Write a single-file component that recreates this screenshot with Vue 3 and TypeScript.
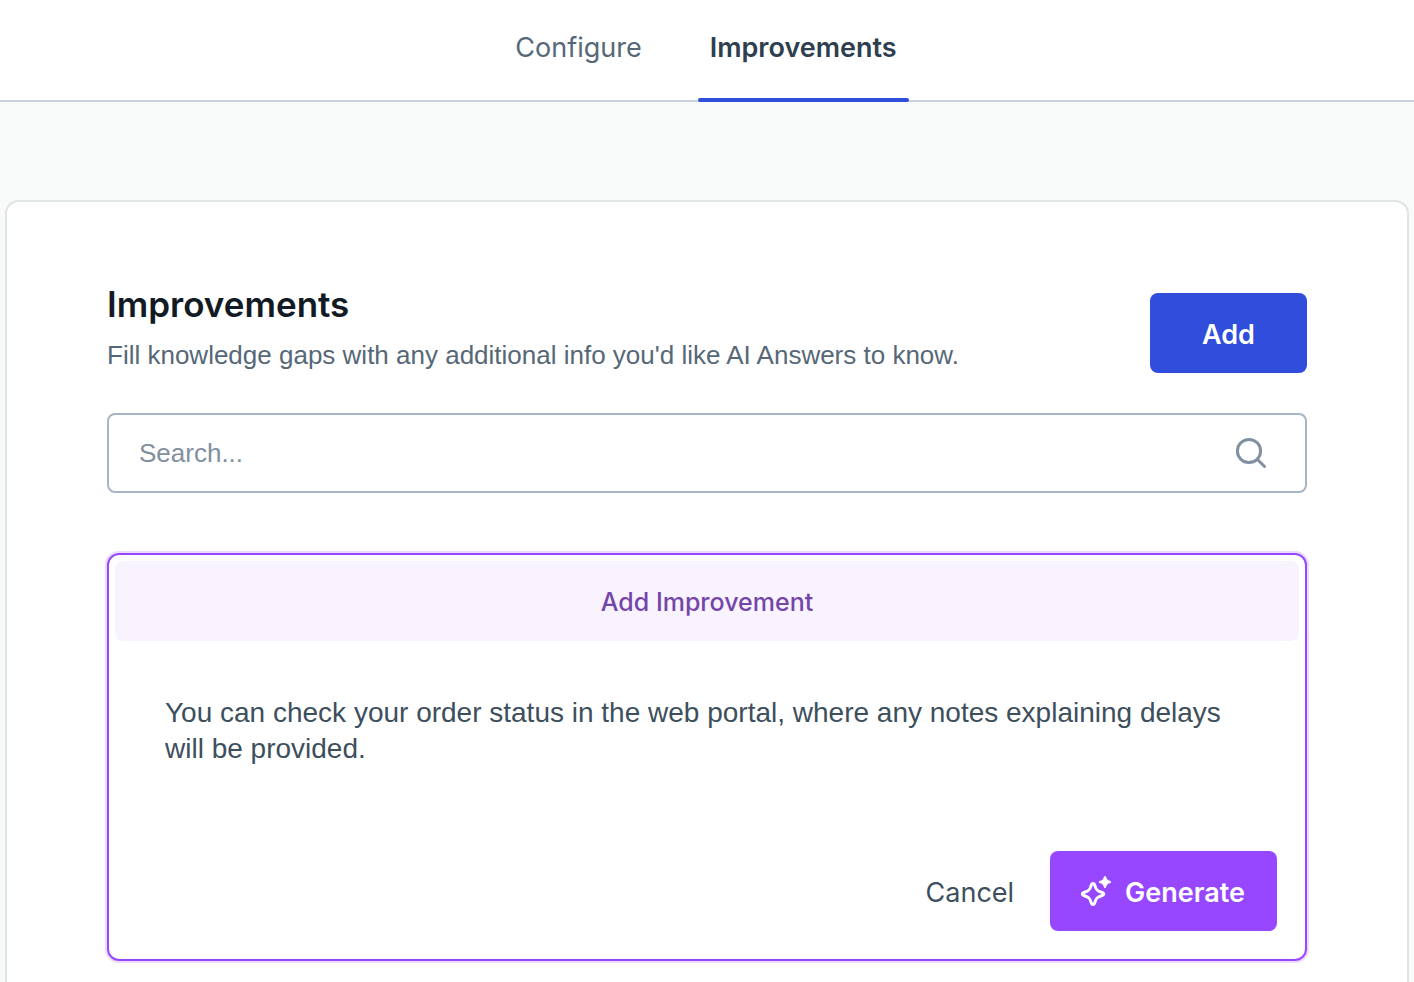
<script setup lang="ts">
import { ref } from 'vue'

interface Tab {
  id: string
  label: string
}

const tabs: Tab[] = [
  { id: 'configure', label: 'Configure' },
  { id: 'improvements', label: 'Improvements' },
]

const activeTab = ref<string>('improvements')
const search = ref<string>('')
const draft = ref<string>(
  'You can check your order status in the web portal, where any notes explaining delays will be provided.',
)
</script>

<template>
  <div class="page">
    <nav class="tabs">
      <button
        v-for="tab in tabs"
        :key="tab.id"
        type="button"
        class="tab"
        :class="{ active: tab.id === activeTab }"
        @click="activeTab = tab.id"
      >
        {{ tab.label }}
      </button>
    </nav>

    <main class="card">
      <header class="card-header">
        <div class="intro">
          <h1 class="title">Improvements</h1>
          <p class="subtitle">Fill knowledge gaps with any additional info you'd like AI Answers to know.</p>
        </div>
        <button type="button" class="button primary">Add</button>
      </header>

      <label class="search">
        <input v-model="search" type="text" class="search-input" placeholder="Search..." aria-label="Search" />
        <svg class="search-icon" viewBox="0 0 32 32" aria-hidden="true">
          <circle cx="14" cy="14" r="11.6" />
          <path d="M22.5 22.5 L29.5 29.5" />
        </svg>
      </label>

      <section class="panel">
        <h2 class="panel-title">Add Improvement</h2>
        <textarea v-model="draft" class="draft" rows="3" aria-label="Improvement text"></textarea>
        <div class="actions">
          <button type="button" class="cancel">Cancel</button>
          <button type="button" class="button generate">
            <svg class="sparkle" viewBox="0 0 32 32" aria-hidden="true">
              <path
                class="star-large"
                d="M13 7.5 C14 7.5 14.6 8.4 15 9.8 C16.1 13.7 17.3 14.9 21 16 C24.6 17.1 24.6 18.9 21 20 C17.3 21.1 16.1 22.3 15 26.2 C14.2 29.3 11.8 29.3 11 26.2 C9.9 22.3 8.7 21.1 5 20 C1.4 18.9 1.4 17.1 5 16 C8.7 14.9 9.9 13.7 11 9.8 C11.4 8.4 12 7.5 13 7.5 Z"
              />
              <path
                class="star-small"
                d="M25 0.4 C25.5 0.4 25.7 0.8 25.8 1.2 C26.5 3.8 27.2 4.5 29.8 5.2 C31.2 5.6 31.2 6.4 29.8 6.8 C27.2 7.5 26.5 8.2 25.8 10.8 C25.4 12.2 24.6 12.2 24.2 10.8 C23.5 8.2 22.8 7.5 20.2 6.8 C18.8 6.4 18.8 5.6 20.2 5.2 C22.8 4.5 23.5 3.8 24.2 1.2 C24.3 0.8 24.5 0.4 25 0.4 Z"
              />
            </svg>
            <span>Generate</span>
          </button>
        </div>
      </section>
    </main>
  </div>
</template>

<style>
html {
  background: #f8faf9;
}

body {
  margin: 0;
}
</style>

<style scoped>
.page {
  box-sizing: border-box;
  display: flex;
  flex-direction: column;
  min-height: 100vh;
  font-family: Inter, "Liberation Sans", sans-serif;
  font-size: 27px;
  color: #3d4f5d;
}

.page *,
.page *::before {
  box-sizing: border-box;
}

button,
input,
textarea {
  margin: 0;
  border: 0;
  padding: 0;
  background: none;
  font: inherit;
  color: inherit;
}

button {
  cursor: pointer;
}

.tabs {
  display: flex;
  justify-content: center;
  gap: 46px;
  height: 102px;
  border-bottom: 2px solid #c8d2dc;
  background: #fff;
}

.tab {
  position: relative;
  height: 102px;
  padding: 0 10px 8px;
  color: #566878;
}

.tab.active {
  padding: 0 12px 8px;
  font-weight: 600;
  color: #2e404f;
}

.tab.active::before {
  content: "";
  position: absolute;
  right: 0;
  bottom: 0;
  left: 0;
  height: 4px;
  border-radius: 2px;
  background: #304ddb;
}

.card {
  flex: 1;
  margin: 98px 5px 0;
  padding: 80px 100px 19px;
  border: 2px solid #e1e4e4;
  border-bottom: 0;
  border-radius: 14px 14px 0 0;
  background: #fff;
}

.card-header {
  display: flex;
  align-items: flex-end;
  justify-content: space-between;
  margin-bottom: 40px;
}

.title {
  margin: 0;
  font-size: 35px;
  font-weight: 600;
  line-height: 44px;
  color: #121a24;
}

.subtitle {
  margin: 12px 0 0;
  font-family: "Liberation Sans", sans-serif;
  font-size: 26px;
  line-height: 35px;
  color: #566878;
}

.button {
  display: flex;
  align-items: center;
  justify-content: center;
  height: 80px;
  padding-top: 2px;
  border-radius: 8px;
  font-weight: 600;
  color: #fff;
}

.primary {
  width: 157px;
  background: #304ddb;
}

.search {
  display: flex;
  align-items: center;
  height: 80px;
  padding: 0 38px 0 30px;
  border: 2px solid #a8b6c4;
  border-radius: 8px;
}

.search-input {
  flex: 1;
  min-width: 0;
  outline: none;
  font-family: "Liberation Sans", sans-serif;
  font-size: 26px;
}

.search-input::placeholder {
  color: #8190a0;
  opacity: 1;
}

.search-icon {
  width: 32px;
  height: 32px;
  fill: none;
  stroke: #8190a0;
  stroke-width: 3;
  stroke-linecap: round;
}

.panel {
  display: flex;
  flex-direction: column;
  margin-top: 60px;
  padding: 6px;
  border: 2px solid #9747ff;
  border-radius: 12px;
  box-shadow: 0 0 0 2px #eadbff;
}

.panel-title {
  margin: 0;
  padding-top: 2px;
  border-radius: 8px;
  background: #f8f3ff;
  font-size: 25px;
  font-weight: 500;
  line-height: 78px;
  text-align: center;
  color: #7446a8;
}

.draft {
  height: 156px;
  margin: 54px 50px 0;
  outline: none;
  resize: none;
  font-family: "Liberation Sans", sans-serif;
  font-size: 28px;
  line-height: 36px;
}

.actions {
  display: flex;
  align-items: center;
  justify-content: flex-end;
  gap: 36px;
  padding: 0 22px 22px;
}

.cancel {
  padding-top: 2px;
}

.generate {
  gap: 13px;
  padding: 2px 32px 0 30px;
  background: #9747ff;
}

.sparkle {
  width: 32px;
  height: 32px;
}

.star-large {
  fill: none;
  stroke: #fff;
  stroke-width: 3;
  stroke-linejoin: round;
}

.star-small {
  fill: #fff;
  stroke: #fff;
  stroke-width: 1;
}
</style>
